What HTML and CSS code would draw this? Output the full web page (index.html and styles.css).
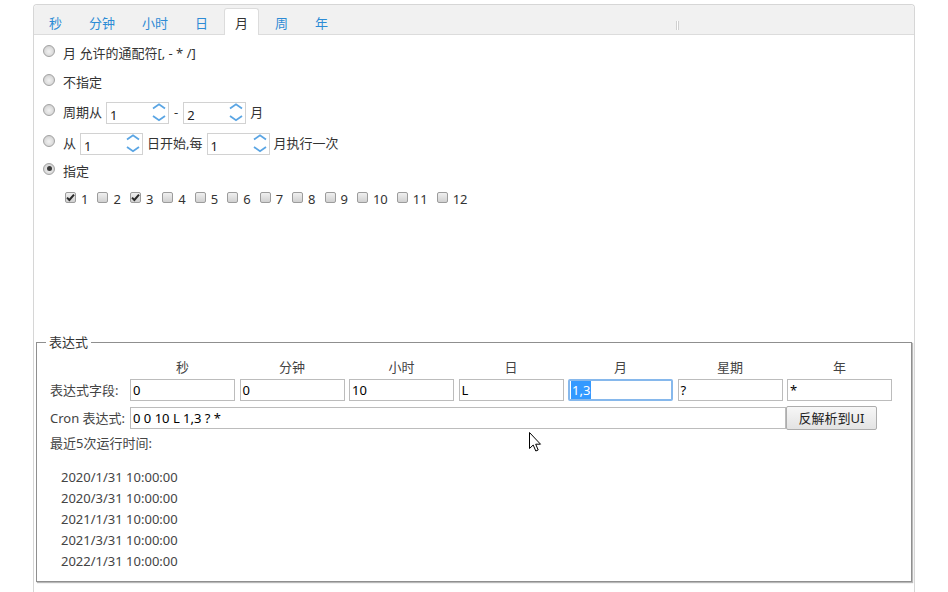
FILE: index.html
```html
<!DOCTYPE html>
<html lang="zh-CN">
<head>
<meta charset="utf-8">
<title>Cron 表达式</title>
<link rel="stylesheet" href="styles.css">
</head>
<body>
<div class="panel">
  <div class="tabs">
    <span class="tab">秒</span>
    <span class="tab">分钟</span>
    <span class="tab">小时</span>
    <span class="tab">日</span>
    <span class="tab active">月</span>
    <span class="tab">周</span>
    <span class="tab">年</span>
    <span class="ibeam"></span>
  </div>
  <div class="tab-body">
    <div class="row"><span class="radio"></span><span>月 允许的通配符[, - * /]</span></div>
    <div class="row"><span class="radio"></span><span>不指定</span></div>
    <div class="row tall">
      <span class="radio"></span><span>周期从</span>
      <span class="spin"><span class="val">1</span><svg class="arrows" width="16" height="20" viewBox="0 0 16 20"><polyline points="2,5.5 8,1.3 14,5.5"/><polyline points="2,13 8,17.2 14,13"/></svg></span>
      <span class="dash">-</span>
      <span class="spin"><span class="val">2</span><svg class="arrows" width="16" height="20" viewBox="0 0 16 20"><polyline points="2,5.5 8,1.3 14,5.5"/><polyline points="2,13 8,17.2 14,13"/></svg></span>
      <span>月</span>
    </div>
    <div class="row tall">
      <span class="radio"></span><span>从</span>
      <span class="spin"><span class="val">1</span><svg class="arrows" width="16" height="20" viewBox="0 0 16 20"><polyline points="2,5.5 8,1.3 14,5.5"/><polyline points="2,13 8,17.2 14,13"/></svg></span>
      <span>日开始,每</span>
      <span class="spin"><span class="val">1</span><svg class="arrows" width="16" height="20" viewBox="0 0 16 20"><polyline points="2,5.5 8,1.3 14,5.5"/><polyline points="2,13 8,17.2 14,13"/></svg></span>
      <span>月执行一次</span>
    </div>
    <div class="row short"><span class="radio checked"></span><span>指定</span></div>
    <div class="checks">
      <span class="cb checked"><svg width="9" height="9" viewBox="0 0 9 9"><path d="M1 4.6 L3.4 7 L8 1.6"/></svg></span><span class="num">1</span>
      <span class="cb"></span><span class="num">2</span>
      <span class="cb checked"><svg width="9" height="9" viewBox="0 0 9 9"><path d="M1 4.6 L3.4 7 L8 1.6"/></svg></span><span class="num">3</span>
      <span class="cb"></span><span class="num">4</span>
      <span class="cb"></span><span class="num">5</span>
      <span class="cb"></span><span class="num">6</span>
      <span class="cb"></span><span class="num">7</span>
      <span class="cb"></span><span class="num">8</span>
      <span class="cb"></span><span class="num">9</span>
      <span class="cb"></span><span class="num">10</span>
      <span class="cb"></span><span class="num">11</span>
      <span class="cb"></span><span class="num">12</span>
    </div>
  </div>
  <fieldset class="expr">
    <legend>表达式</legend>
    <div class="expr-head">
      <span class="lbl"></span>
      <span class="head">秒</span>
      <span class="head">分钟</span>
      <span class="head">小时</span>
      <span class="head">日</span>
      <span class="head">月</span>
      <span class="head">星期</span>
      <span class="head">年</span>
    </div>
    <div class="expr-fields">
      <span class="lbl">表达式字段:</span>
      <span class="field">0</span>
      <span class="field">0</span>
      <span class="field">10</span>
      <span class="field">L</span>
      <span class="field focus"><span class="sel">1,3</span></span>
      <span class="field">?</span>
      <span class="field">*</span>
    </div>
    <div class="cron-row">
      <span class="lbl wide">Cron 表达式:</span>
      <span class="field cron">0 0 10 L 1,3 ? *</span>
      <span class="btn">反解析到UI</span>
    </div>
    <div class="next-label">最近5次运行时间:</div>
    <ul class="times">
      <li>2020/1/31 10:00:00</li>
      <li>2020/3/31 10:00:00</li>
      <li>2021/1/31 10:00:00</li>
      <li>2021/3/31 10:00:00</li>
      <li>2022/1/31 10:00:00</li>
    </ul>
  </fieldset>
</div>
<svg class="cursor" width="14" height="21" viewBox="0 0 14 21"><path d="M0.5 0.5 L0.5 16.5 L4.2 13 L6.8 19 L9.2 18 L6.7 12.2 L11.5 12.2 Z"/></svg>
</body>
</html>
```

FILE: styles.css
```css
html, body {
  margin: 0;
  padding: 0;
  background: #fff;
}
body {
  font-family: "Noto Sans", "Noto Sans CJK SC", sans-serif;
  font-size: 13px;
  line-height: 18px;
  color: #333;
  position: relative;
  height: 592px;
  overflow: hidden;
}
.panel {
  margin: 4px 0 0 33px;
  width: 882px;
  height: 588px;
  box-sizing: border-box;
  border: 1px solid #d6d6d6;
  border-bottom: 0;
  border-radius: 4px 4px 0 0;
}
.tabs {
  position: relative;
  display: flex;
  align-items: flex-end;
  gap: 5px;
  height: 29px;
  padding-left: 4px;
  background: #f1f1f1;
  border-bottom: 1px solid #dcdcdc;
  border-radius: 4px 4px 0 0;
}
.tab {
  height: 24px;
  padding: 2px 10px 0;
  line-height: 24px;
  border: 1px solid transparent;
  border-bottom: 0;
  margin-bottom: -1px;
  color: #2d8bd5;
  border-radius: 3px 3px 0 0;
}
.tab.active {
  background: #fff;
  border-color: #dcdcdc;
  color: #333;
}
.ibeam {
  position: absolute;
  left: 642px;
  top: 16px;
  width: 1px;
  height: 9px;
  background: #fff;
  border-left: 1px solid #d0d0d0;
  border-right: 1px solid #d0d0d0;
}
.tab-body {
  height: 298px;
  box-sizing: border-box;
  padding: 3px 0 0 9px;
}
.row {
  display: flex;
  align-items: center;
  height: 29px;
  gap: 4px;
}
.row.tall { height: 31px; }
.row.short { height: 25px; }
.radio {
  width: 10px;
  height: 10px;
  border-radius: 50%;
  border: 1px solid #a2a2a2;
  background: radial-gradient(circle at 50% 55%, #f2f2f2 0, #dedede 50%, #c2c2c2 100%);
  margin-right: 4px;
  transform: translateY(-2px);
  position: relative;
}
.radio.checked::after {
  content: "";
  position: absolute;
  left: 2.5px;
  top: 2.5px;
  width: 5px;
  height: 5px;
  border-radius: 50%;
  background: #3a3a3a;
}
.spin {
  display: inline-flex;
  justify-content: space-between;
  width: 63px;
  height: 22px;
  box-sizing: border-box;
  border: 1px solid #d2d2d2;
  background: #fff;
  margin-top: 2px;
}
.val {
  padding: 3px 0 0 3px;
  line-height: 18px;
  color: #222;
}
.arrows {
  margin-right: 1px;
}
.arrows polyline {
  fill: none;
  stroke: #5aa5e4;
  stroke-width: 1.8;
}
.dash {
  margin: 0 1px;
}
.checks {
  display: flex;
  align-items: center;
  height: 30px;
  padding-left: 22px;
}
.cb {
  width: 9px;
  height: 9px;
  border: 1px solid #9c9c9c;
  border-radius: 2px;
  background: linear-gradient(#f0f0f0, #d0d0d0);
  display: inline-flex;
  align-items: center;
  justify-content: center;
  transform: translateY(-1px);
}
.cb svg path {
  fill: none;
  stroke: #2a2a2a;
  stroke-width: 2;
}
.num {
  margin: 2px 9px 0 5px;
  color: #333;
}
.expr {
  margin: 0 2px;
  padding: 6px 0 9px 13px;
  border: 1px solid #8f8f8f;
  box-shadow: 1px 1px 1px rgba(0, 0, 0, 0.28);
  min-width: 0;
}
.expr legend {
  padding: 0 3px;
  margin-left: -4px;
  line-height: 18px;
  color: #333;
}
.expr-head, .expr-fields {
  display: flex;
  gap: 4.5px;
}
.expr-head {
  height: 20px;
  line-height: 20px;
}
.lbl {
  width: 75.5px;
  flex: none;
  color: #444;
}
.head {
  width: 105px;
  text-align: center;
  color: #444;
}
.expr-fields {
  margin-top: 2px;
  align-items: center;
  height: 22px;
}
.field {
  width: 105px;
  height: 22px;
  box-sizing: border-box;
  border: 1px solid #bcbcbc;
  padding-left: 2px;
  line-height: 20px;
  color: #000;
  background: #fff;
}
.field.focus {
  border: 2px solid #86b8ec;
  border-radius: 2px;
  padding-left: 1px;
  line-height: 18px;
}
.sel {
  background: #3399ff;
  color: #fff;
  padding: 0 1px;
}
.cron-row {
  display: flex;
  align-items: center;
  margin-top: 5px;
  height: 24px;
}
.lbl.wide {
  width: 80px;
}
.field.cron {
  width: 656px;
  padding-left: 2px;
}
.btn {
  width: 91px;
  height: 24px;
  box-sizing: border-box;
  border: 1px solid #adadad;
  border-radius: 2px;
  background: linear-gradient(#f7f7f7, #e3e3e3);
  text-align: center;
  line-height: 22px;
  color: #222;
}
.next-label {
  margin-top: 3px;
  line-height: 20px;
  color: #444;
}
.times {
  list-style: none;
  margin: 14px 0 0 11px;
  padding: 0;
  line-height: 21px;
  color: #444;
}
.cursor {
  position: absolute;
  left: 529px;
  top: 432px;
}
.cursor path {
  fill: #fff;
  stroke: #000;
  stroke-width: 1;
  stroke-linejoin: miter;
}
```
